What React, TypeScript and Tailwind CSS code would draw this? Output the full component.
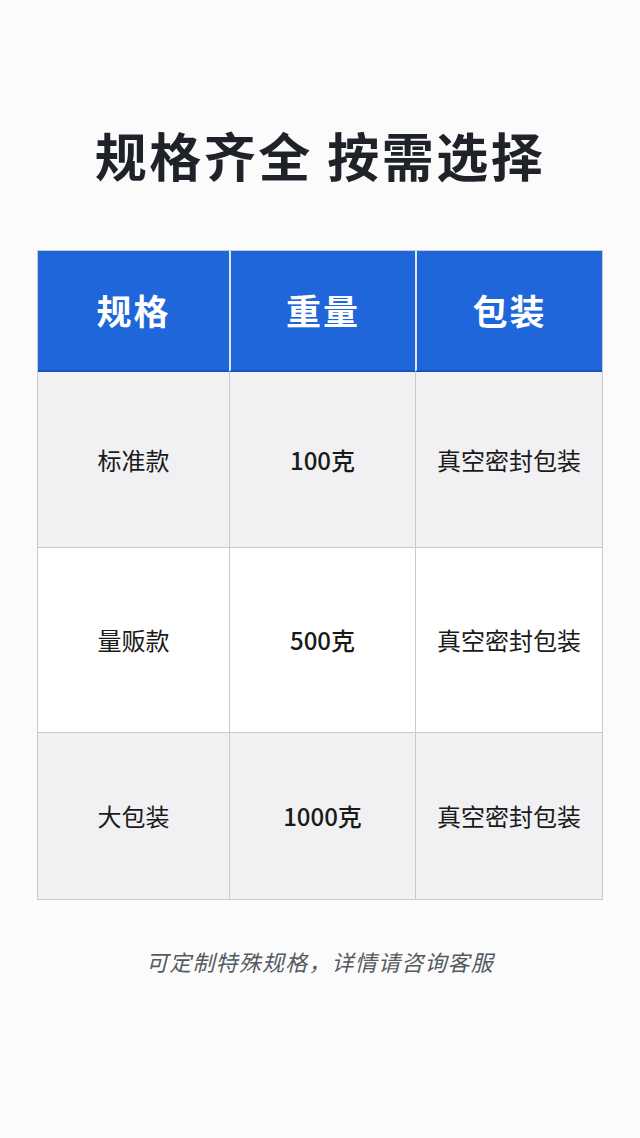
import React from "react"

const font = { fontFamily: '"Noto Sans CJK SC", "Noto Sans", sans-serif' }

const rows = [
  { name: "标准款", weight: "100克", pack: "真空密封包装", bg: "bg-[#f1f1f3]", h: "h-[175px]" },
  { name: "量贩款", weight: "500克", pack: "真空密封包装", bg: "bg-white", h: "h-[185px]" },
  { name: "大包装", weight: "1000克", pack: "真空密封包装", bg: "bg-[#f1f1f3]", h: "h-[167px]" },
]

export default function App() {
  return (
    <div className="w-[640px] h-[1138px] bg-[#fbfbfc] flex flex-col items-center" style={font}>
      {/* Title */}
      <h1 className="mt-[120px] text-[52px] leading-[70px] font-bold text-[#1f2329] tracking-[2.5px]">
        规格齐全 按需选择
      </h1>

      {/* Table */}
      <div className="mt-[60px] w-[566px] border border-[#c9c9cc] grid grid-cols-[191px_186px_187px]">
        {["规格", "重量", "包装"].map((h, i) => (
          <div
            key={h}
            className={`h-[121px] bg-[#1f66db] border-b-2 border-b-[#1553c4] flex items-center justify-center text-white text-[35px] font-bold tracking-[2px] ${i > 0 ? "border-l-2 border-l-[#dfe6f3]" : ""}`}
          >
            {h}
          </div>
        ))}
        {rows.map((r, ri) => (
          <React.Fragment key={r.name}>
            {[r.name, r.weight, r.pack].map((c, ci) => (
              <div
                key={ci}
                className={`${r.h} ${r.bg} flex items-center justify-center text-[24px] text-[#1a1a1a] ${ci === 1 ? "font-medium" : ""} ${ci > 0 ? "border-l border-l-[#c9c9cc]" : ""} ${ri > 0 ? "border-t border-t-[#c9c9cc]" : ""}`}
              >
                {c}
              </div>
            ))}
          </React.Fragment>
        ))}
      </div>

      {/* Footnote */}
      <p className="mt-[45px] text-[22px] italic text-[#555a60] tracking-[1.2px]">
        可定制特殊规格，详情请咨询客服
      </p>
    </div>
  )
}
